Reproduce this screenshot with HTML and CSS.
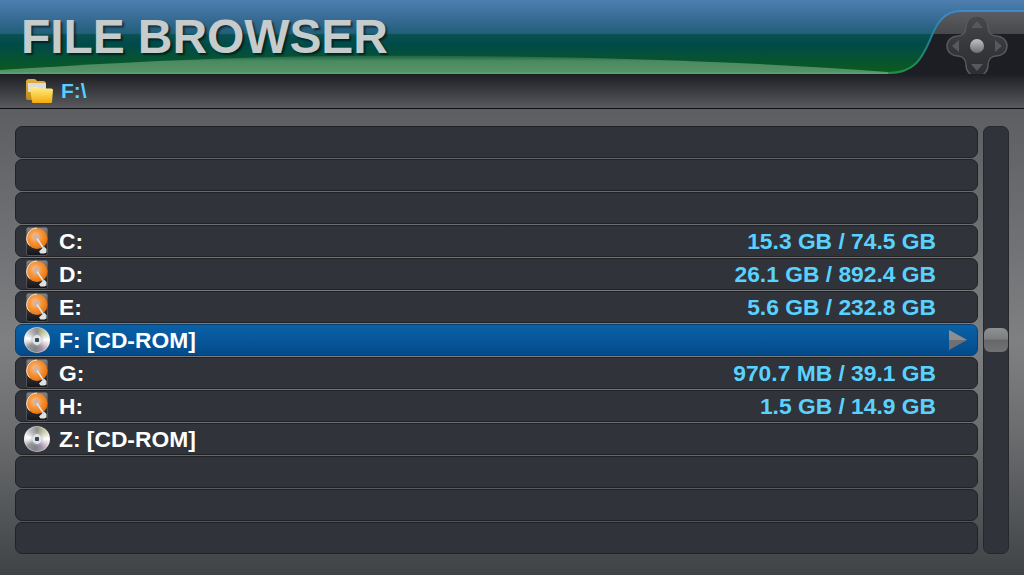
FILE: index.html
```html
<!DOCTYPE html>
<html lang="en">
<head>
  <meta charset="UTF-8" />
  <title>File Browser</title>
  <link rel="stylesheet" href="styles.css">
</head>
<body>
  <svg class="defs" width="0" height="0">
    <defs>
      <radialGradient id="platter" cx="0.42" cy="0.4" r="0.62">
        <stop offset="0" stop-color="#fcc48c"/>
        <stop offset="0.4" stop-color="#f89c48"/>
        <stop offset="0.85" stop-color="#ec7c18"/>
        <stop offset="1" stop-color="#e87410"/>
      </radialGradient>
      <linearGradient id="drive-case" x1="0" y1="0" x2="0" y2="1">
        <stop offset="0" stop-color="#86888a"/>
        <stop offset="0.6" stop-color="#2e3034"/>
        <stop offset="1" stop-color="#141518"/>
      </linearGradient>
      <linearGradient id="folder-back" x1="0" y1="0" x2="0" y2="1">
        <stop offset="0" stop-color="#e0b040"/>
        <stop offset="1" stop-color="#c08a18"/>
      </linearGradient>
      <linearGradient id="folder-front" x1="0" y1="0" x2="0" y2="1">
        <stop offset="0" stop-color="#fff084"/>
        <stop offset="1" stop-color="#f4aa0c"/>
      </linearGradient>
      <symbol id="icon-drive" viewBox="0 0 22 29">
        <rect x="0.5" y="0.5" width="21" height="28" rx="2" fill="url(#drive-case)" stroke="#5e6063" stroke-width="0.7"/>
        <circle cx="11" cy="11.500" r="10.500" fill="url(#platter)"/>
        <path d="M3.500 18.500A10.500 10.500 0 0 1 11 1" fill="none" stroke="#ffe4c8" stroke-width="1"/>
        <circle cx="10.500" cy="10.500" r="3.200" fill="#cfb4a4"/>
        <path d="M11 11.500l6 9" stroke="#e6e6e6" stroke-width="1.500"/>
        <path d="M13 24.500l5-5 2.500 2.500v3.500l-2 1h-4z" fill="#dfe1e1"/>
      </symbol>
    </defs>
  </svg>

  <header class="masthead">
    <svg class="masthead-art" width="1024" height="74" viewBox="0 0 1024 74">
      <defs>
        <linearGradient id="sky" x1="0" y1="0" x2="0" y2="1">
          <stop offset="0" stop-color="#4f7fb0"/>
          <stop offset="0.27" stop-color="#356a92"/>
          <stop offset="0.45" stop-color="#22607a"/>
          <stop offset="0.47" stop-color="#0a5050"/>
          <stop offset="0.6" stop-color="#004a48"/>
          <stop offset="0.95" stop-color="#0b5a22"/>
        </linearGradient>
        <linearGradient id="swoosh" x1="0" y1="0" x2="0" y2="1">
          <stop offset="0" stop-color="#3a7a52" stop-opacity="0.5"/>
          <stop offset="0.3" stop-color="#4a8a60"/>
          <stop offset="1" stop-color="#569468"/>
        </linearGradient>
        <linearGradient id="lip" x1="0" y1="0" x2="0" y2="1">
          <stop offset="0" stop-color="#3a8cd0"/>
          <stop offset="0.5" stop-color="#1d7f8c"/>
          <stop offset="1" stop-color="#1f8f46"/>
        </linearGradient>
        <linearGradient id="band" x1="0" y1="0" x2="0" y2="1">
          <stop offset="0" stop-color="#5a5c60"/>
          <stop offset="1" stop-color="#46484c"/>
        </linearGradient>
        <linearGradient id="pad" x1="0" y1="0" x2="0" y2="1">
          <stop offset="0" stop-color="#46484c"/>
          <stop offset="0.5" stop-color="#35373b"/>
          <stop offset="1" stop-color="#2c2e32"/>
        </linearGradient>
        <linearGradient id="knob" x1="0" y1="0" x2="0" y2="1">
          <stop offset="0" stop-color="#c0c2c4"/>
          <stop offset="1" stop-color="#6c6e72"/>
        </linearGradient>
      </defs>
      <rect width="1024" height="74" fill="url(#sky)"/>
      <path d="M0 70C110 63 220 57 340 56C500 55 700 58 888 72V73H0z" fill="url(#swoosh)"/>
      <path d="M0 72H890V74H0z" fill="#5a9f70"/>
      <path d="M888 74C915 74 922 58 930 40C937 22 944 11 962 11H1024V74z" fill="#1c1e24"/>
      <path d="M931 34C938 20 946 12 962 12H1024V34z" fill="url(#band)"/>
      <path d="M888 73C915 73 922 58 930 40C937 22 944 11 962 11H1024" fill="none" stroke="url(#lip)" stroke-width="2"/>
      <path d="M977 16C984 16 988 21 988 27C988 32 991 36 996 36C1002 36 1007 40 1007 46C1007 52 1002 56 996 56C991 56 988 60 988 65C988 71 984 76 977 76C970 76 966 71 966 65C966 60 963 56 958 56C952 56 947 52 947 46C947 40 952 36 958 36C963 36 966 32 966 27C966 21 970 16 977 16z" fill="url(#pad)" stroke="#57595d" stroke-width="1.500"/>
      <path d="M977 21l6 7h-12zM977 71l6-7h-12zM952 46l7-6v12zM1002 46l-7-6v12z" fill="#56585c"/>
      <circle cx="977" cy="46" r="7" fill="url(#knob)"/>
    </svg>
    <h1 class="title">FILE BROWSER</h1>
  </header>

  <div class="path-bar">
    <svg class="folder" width="28" height="26" viewBox="0 0 28 26">
      <path d="M1 4q0-3 3-3h5q2 0 3 2h6q3 0 3 3v14q0 2-2 2H3q-2 0-2-2z" fill="url(#folder-back)"/>
      <path d="M3 5h17q1 0 1 2v7H3z" fill="#dcdcdc"/>
      <path d="M5 10q0-1 1-1h6q1 0 2 1.500h12q2 0 2 1.500l-1 12q0 1-1 1H8q-1 0-1-1z" fill="url(#folder-front)"/>
    </svg>
    <span class="path-text">F:\</span>
  </div>

  <main class="browser">
    <ul class="rows">
      <li class="row"></li>
      <li class="row"></li>
      <li class="row"></li>
      <li class="row">
        <svg class="icon drive" width="22" height="29"><use href="#icon-drive"/></svg>
        <span class="name">C:</span><span class="size">15.3 GB / 74.5 GB</span>
      </li>
      <li class="row">
        <svg class="icon drive" width="22" height="29"><use href="#icon-drive"/></svg>
        <span class="name">D:</span><span class="size">26.1 GB / 892.4 GB</span>
      </li>
      <li class="row">
        <svg class="icon drive" width="22" height="29"><use href="#icon-drive"/></svg>
        <span class="name">E:</span><span class="size">5.6 GB / 232.8 GB</span>
      </li>
      <li class="row selected">
        <div class="icon disc"></div>
        <span class="name">F: [CD-ROM]</span>
        <svg class="arrow" width="18" height="20" viewBox="0 0 18 20"><path d="M0 0L18 10L0 20z" fill="#6e7074"/><path d="M0 0L18 10H0z" fill="#8c8e90"/></svg>
      </li>
      <li class="row">
        <svg class="icon drive" width="22" height="29"><use href="#icon-drive"/></svg>
        <span class="name">G:</span><span class="size">970.7 MB / 39.1 GB</span>
      </li>
      <li class="row">
        <svg class="icon drive" width="22" height="29"><use href="#icon-drive"/></svg>
        <span class="name">H:</span><span class="size">1.5 GB / 14.9 GB</span>
      </li>
      <li class="row">
        <div class="icon disc"></div>
        <span class="name">Z: [CD-ROM]</span>
      </li>
      <li class="row"></li>
      <li class="row"></li>
      <li class="row"></li>
    </ul>
    <div class="scrollbar">
      <div class="thumb"></div>
    </div>
  </main>
</body>
</html>
```
FILE: styles.css
```css
* { box-sizing: border-box; margin: 0; padding: 0; }
html, body { height: 100%; overflow: hidden; }
body {
  display: flex;
  flex-direction: column;
  background: #222;
  color: #fff;
  font-family: "Liberation Sans", Arial, sans-serif;
  font-weight: bold;
}
.defs { position: absolute; }

.masthead {
  position: relative;
  height: 74px;
  padding: 10px 0 0 21px;
  flex: none;
}
.masthead-art {
  position: absolute;
  top: 0;
  left: 0;
  display: block;
}
.title {
  position: relative;
  font-size: 48px;
  letter-spacing: -0.1px;
  line-height: 54px;
  color: #c6cbcc;
  text-shadow: 2px 2px 2px rgba(0, 0, 0, 0.55);
}

.path-bar {
  flex: none;
  height: 35px;
  display: flex;
  align-items: center;
  gap: 8px;
  padding-left: 25px;
  background: linear-gradient(#1c1e23, #585a5e);
  border-bottom: 1px solid #101114;
}
.path-text {
  font-size: 21px;
  color: #55d0ff;
}

.browser {
  flex: 1;
  display: flex;
  gap: 5px;
  padding: 17px 15px 21px;
  background: linear-gradient(#5c5e61, #7e8082 50%, #6a6c6e 70%, #404345);
}
.rows {
  flex: 1;
  display: flex;
  flex-direction: column;
  gap: 1px;
  list-style: none;
}
.row {
  height: 32px;
  display: flex;
  align-items: center;
  padding-left: 11px;
  padding-right: 41px;
  background: #30343a;
  border: 1px solid #202226;
  border-radius: 7px;
  position: relative;
}
.row.selected {
  background: linear-gradient(#0a62a8, #034a8a);
  border-color: #0a3f70;
}
.icon {
  flex: none;
  display: block;
}
.icon.drive { margin-right: 11px; margin-left: -1px; }
.icon.disc {
  width: 26px;
  height: 26px;
  margin-left: -3px;
  margin-right: 9px;
  border-radius: 50%;
  background:
    radial-gradient(circle, #38465c 0 2px, #dfe1e3 2.5px 4.5px, rgba(190, 192, 196, 0.6) 5px, rgba(0, 0, 0, 0) 7px),
    conic-gradient(#8d8f93 0deg, #b8b890 28deg, #d8e0c8 60deg, #fff 88deg, #e6d8dc 112deg, #a294ae 150deg, #7f8185 190deg, #93959a 232deg, #e6e6e6 262deg, #fff 280deg, #b8bac0 320deg, #8d8f93 360deg);
  box-shadow: inset 0 0 0 1px rgba(255, 255, 255, 0.35);
}
.name {
  font-size: 22.8px;
  flex: 1;
}
.size {
  font-size: 22.8px;
  color: #5ad2ff;
}
.arrow {
  position: absolute;
  right: 10px;
  top: 5px;
}

.scrollbar {
  width: 26px;
  height: 428px;
  display: flex;
  align-items: center;
  background: #30343a;
  border: 1px solid #26282c;
  border-radius: 7px;
}
.thumb {
  width: 24px;
  height: 24px;
  border-radius: 6px;
  background: linear-gradient(#8e9092, #7c7e80 45%, #66686a 52%, #707274);
}
```
